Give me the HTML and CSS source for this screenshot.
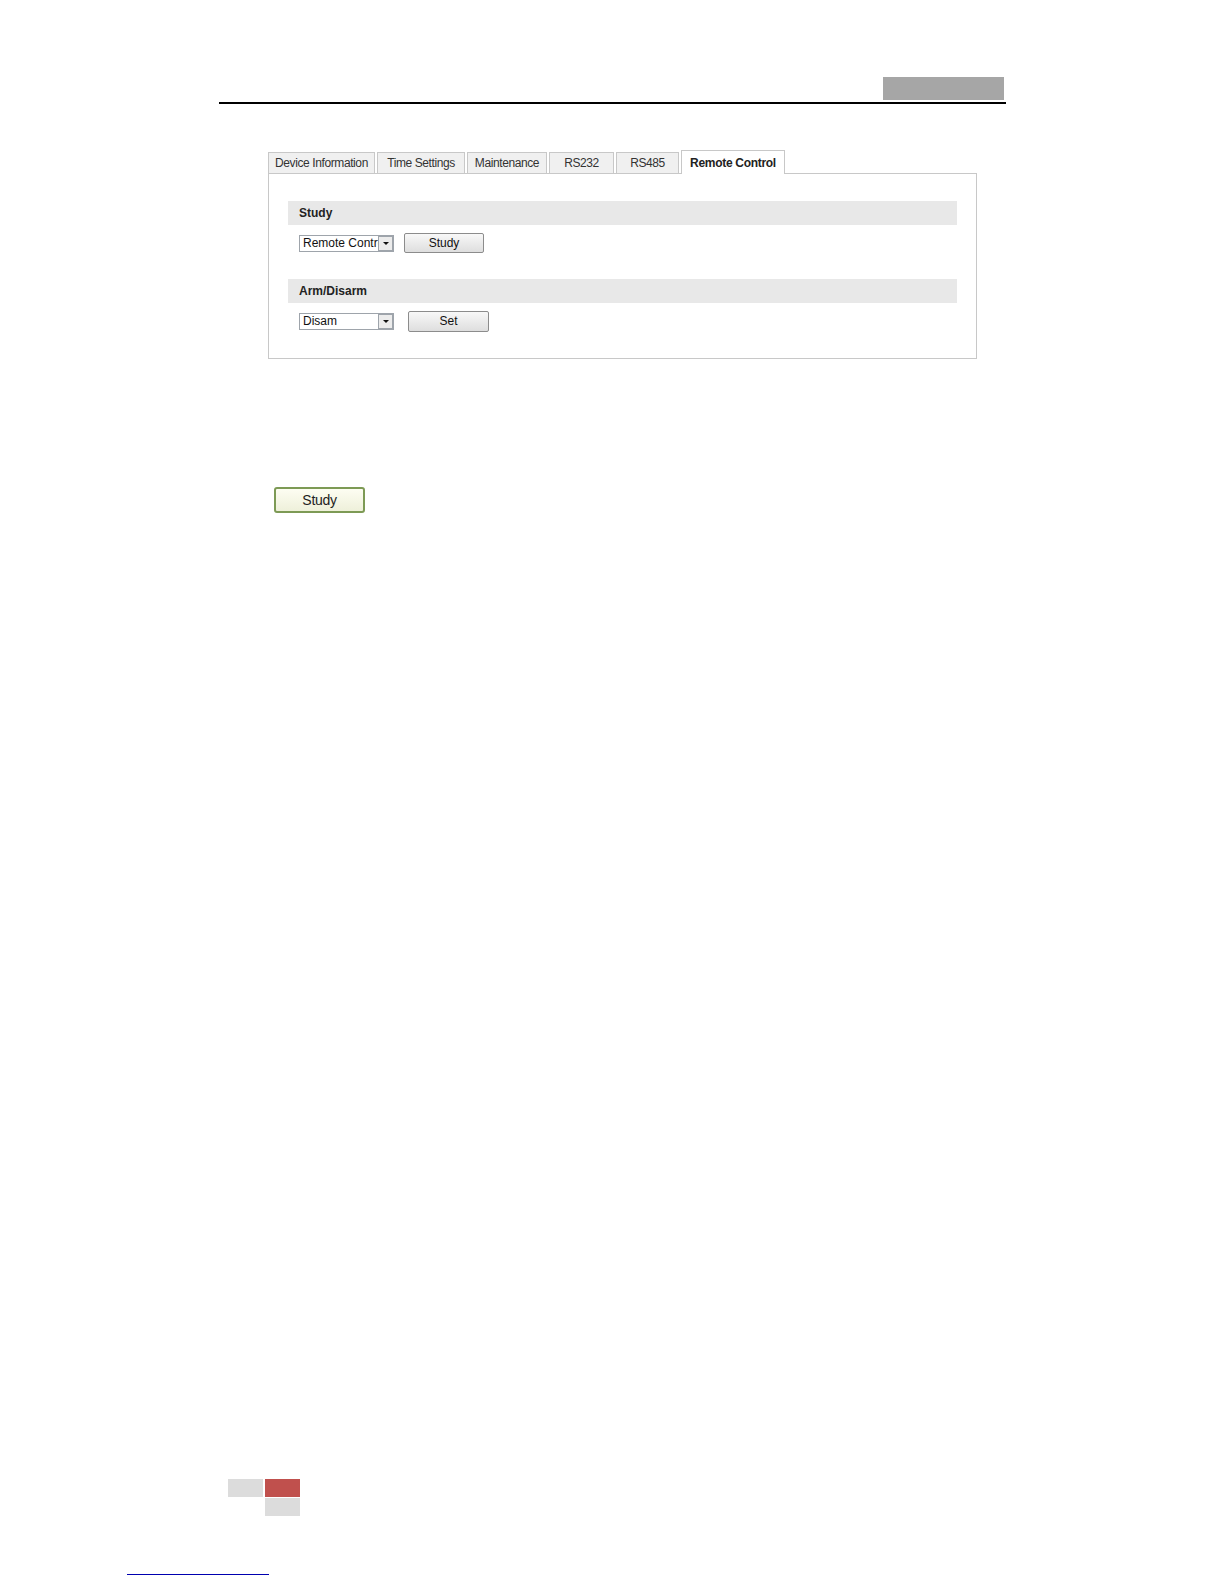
FILE: index.html
```html
<!DOCTYPE html>
<html lang="en">
<head>
    <meta charset="UTF-8">
    <title>Remote Control</title>
    <link rel="stylesheet" href="styles.css">
</head>
<body>

    <div class="top">
        <div class="tag"></div>
    </div>

    <div class="panel">
        <div class="tabs">
            <div class="tab t1">Device Information</div>
            <div class="tab t2">Time Settings</div>
            <div class="tab t3">Maintenance</div>
            <div class="tab t4">RS232</div>
            <div class="tab t5">RS485</div>
            <div class="tab t6 active">Remote Control</div>
        </div>

        <div class="content">
            <div class="section">
                <div class="bar">Study</div>
                <div class="row">
                    <div class="select"><span class="value">Remote Control</span><span class="arrow"></span></div>
                    <button class="btn">Study</button>
                </div>
            </div>

            <div class="section second">
                <div class="bar">Arm/Disarm</div>
                <div class="row">
                    <div class="select"><span class="value">Disam</span><span class="arrow"></span></div>
                    <button class="btn wide">Set</button>
                </div>
            </div>
        </div>
    </div>

    <div class="note">
        <button class="study-btn">Study</button>
    </div>

    <div class="footer">
        <div class="blocks">
            <span class="grey"></span>
            <span class="red"></span>
            <span></span>
            <span class="grey"></span>
        </div>
        <div class="link-line"></div>
    </div>

</body>
</html>
```

FILE: styles.css
```css
body{
    margin: 0;
    background: #fff;
    font-family: "Liberation Sans", Arial, sans-serif;
    color: #222;
}

/* page header */
.top{
    width: 787px;
    margin: 77px 0 0 219px;
    display: flex;
    justify-content: flex-end;
    padding-bottom: 2px;
    border-bottom: 2px solid #000;
}
.tag{
    width: 121px;
    height: 23px;
    margin-right: 2px;
    background: #a6a6a6;
}

/* tabbed panel */
.panel{
    width: 709px;
    margin: 46px 0 0 268px;
}
.tabs{
    display: flex;
    align-items: flex-end;
    gap: 2px;
}
.tab{
    box-sizing: border-box;
    height: 21px;
    border: 1px solid #c8c8c8;
    border-bottom: none;
    background: #f0f0f0;
    font-size: 12px;
    letter-spacing: -0.4px;
    color: #333;
    display: flex;
    align-items: center;
    justify-content: center;
}
.t1{ width: 107px; }
.t2{ width: 88px; }
.t3{ width: 80px; }
.t4{ width: 65px; }
.t5{ width: 63px; }
.t6{ width: 104px; }
.tab.active{
    height: 24px;
    margin-bottom: -1px;
    background: #fff;
    font-weight: bold;
    letter-spacing: -0.3px;
    color: #222;
    position: relative;
}

.content{
    border: 1px solid #c8c8c8;
    padding: 27px 19px 27px 19px;
}
.section.second{
    margin-top: 26px;
}
.bar{
    height: 24px;
    background: #e8e8e8;
    font-size: 12px;
    font-weight: bold;
    color: #222;
    padding-left: 11px;
    display: flex;
    align-items: center;
}
.row{
    display: flex;
    align-items: center;
    height: 20px;
    margin-top: 8px;
    padding-left: 11px;
}

/* fake select */
.select{
    box-sizing: border-box;
    position: relative;
    width: 95px;
    height: 17px;
    border: 1px solid #9ea4ab;
    background: #fff;
    display: flex;
    align-items: center;
    overflow: hidden;
}
.value{
    font-size: 12px;
    color: #111;
    padding-left: 3px;
    white-space: nowrap;
}
.arrow{
    box-sizing: border-box;
    position: absolute;
    right: 0;
    top: 0;
    width: 15px;
    height: 15px;
    border: 1px solid #9ea4ab;
    background: #ececec;
    display: flex;
    align-items: center;
    justify-content: center;
}
.arrow::after{
    content: "";
    border-left: 3px solid transparent;
    border-right: 3px solid transparent;
    border-top: 3px solid #111;
}

.btn{
    box-sizing: border-box;
    width: 80px;
    height: 20px;
    margin-left: 10px;
    border: 1px solid #8c8c8c;
    border-radius: 2px;
    background: linear-gradient(#f8f8f8, #dedede);
    font-family: "Liberation Sans", Arial, sans-serif;
    font-size: 12px;
    color: #111;
    padding: 0;
}
.btn.wide{
    width: 81px;
    height: 21px;
    margin-left: 14px;
}

/* green button */
.note{
    margin: 128px 0 0 274px;
}
.study-btn{
    box-sizing: border-box;
    width: 91px;
    height: 26px;
    border: 2px solid #7d9a55;
    border-radius: 3px;
    background: linear-gradient(#fdfdf2, #eef0da);
    font-family: "Liberation Sans", Arial, sans-serif;
    font-size: 14px;
    letter-spacing: -0.3px;
    color: #222;
    padding: 0;
}

/* footer */
.footer{
    margin-top: 966px;
}
.blocks{
    margin-left: 228px;
    display: grid;
    grid-template-columns: 35px 35px;
    grid-auto-rows: 18px;
    column-gap: 2px;
    row-gap: 1px;
}
.grey{ background: #dcdcdc; }
.red{ background: #c0504d; }
.link-line{
    width: 142px;
    height: 1px;
    margin: 58px 0 0 127px;
    background: #0000b0;
}
```
